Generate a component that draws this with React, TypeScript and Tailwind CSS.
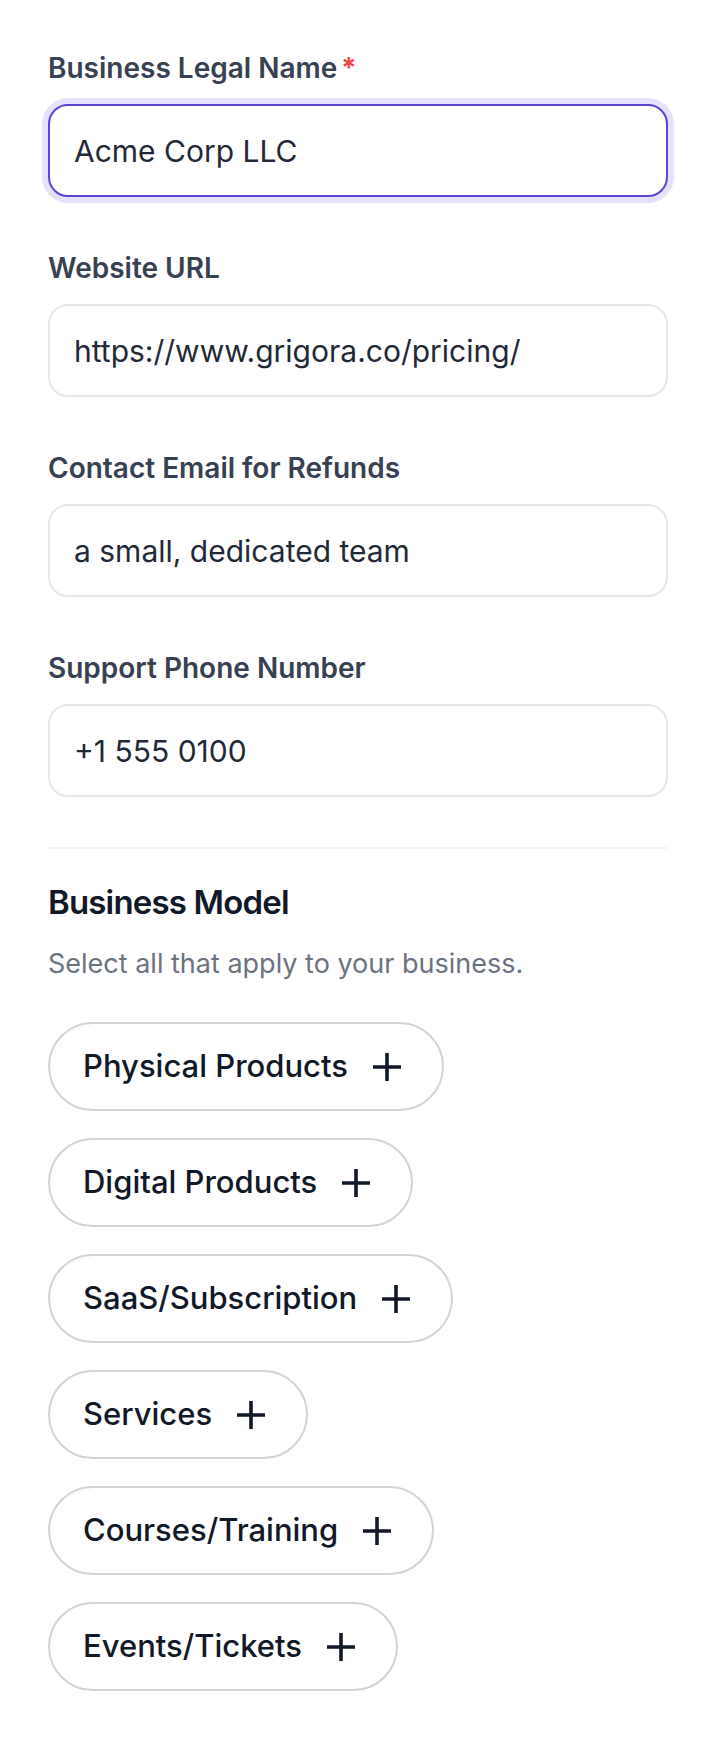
import { useState } from 'react';

const FIELDS = [
    { label: 'Business Legal Name', value: 'Acme Corp LLC', required: true },
    { label: 'Website URL', value: 'https://www.grigora.co/pricing/' },
    { label: 'Contact Email for Refunds', value: 'a small, dedicated team' },
    { label: 'Support Phone Number', value: '+1 555 0100' },
];

const MODELS = [
    'Physical Products',
    'Digital Products',
    'SaaS/Subscription',
    'Services',
    'Courses/Training',
    'Events/Tickets',
];

function PlusIcon() {
    return (
        <svg width="30" height="30" viewBox="0 0 30 30" fill="none" stroke="currentColor" strokeWidth="3.6" strokeLinecap="butt">
            <path d="M1 15h28M15 1v28" />
        </svg>
    );
}

export default function App() {
    const [values, setValues] = useState(FIELDS.map(f => f.value));
    const [selected, setSelected] = useState<string[]>([]);

    const toggle = (m: string) =>
        setSelected(s => (s.includes(m) ? s.filter(x => x !== m) : [...s, m]));

    return (
        <div className="min-h-screen bg-white px-12 pt-12 pb-10 font-['Inter',sans-serif]">
            {/* Contact fields */}
            <div className="flex flex-col gap-[51px]">
                {FIELDS.map((f, i) => (
                    <div key={f.label} className="flex flex-col gap-4">
                        <label className="text-[28px] leading-10 font-semibold text-[#374151]">
                            {f.label}
                            {f.required && <span className="ml-1 text-[#ef4444]">*</span>}
                        </label>
                        <input
                            value={values[i]}
                            onChange={e => setValues(v => v.map((x, j) => (j === i ? e.target.value : x)))}
                            className={`h-[93px] w-full rounded-[20px] border-2 bg-white px-6 text-[30px] text-[#1f2937] outline-none ${i === 0
                                ? 'border-[#5b46d9] ring-[6px] ring-[#e6e1fc]'
                                : 'border-[#e5e7eb]'
                                }`}
                        />
                    </div>
                ))}
            </div>

            <div className="mt-[50px] h-[2px] bg-[#f3f4f6]" />

            {/* Business model */}
            <h2 className="mt-[33px] text-[33px] leading-10 font-semibold tracking-tight text-[#111827]">Business Model</h2>
            <p className="mt-[22px] text-[27px] leading-10 text-[#6b7280]">Select all that apply to your business.</p>

            <div className="mt-[38px] flex flex-col items-start gap-[27px]">
                {MODELS.map(m => (
                    <button
                        key={m}
                        onClick={() => toggle(m)}
                        className={`flex h-[89px] items-center gap-6 rounded-full border-2 pl-[33px] pr-10 text-[31px] font-medium text-[#111827] ${selected.includes(m) ? 'border-[#5b46d9] bg-[#f5f3ff]' : 'border-[#d4d4d8] bg-white'
                            }`}
                    >
                        {m}
                        <PlusIcon />
                    </button>
                ))}
            </div>
        </div>
    );
}
